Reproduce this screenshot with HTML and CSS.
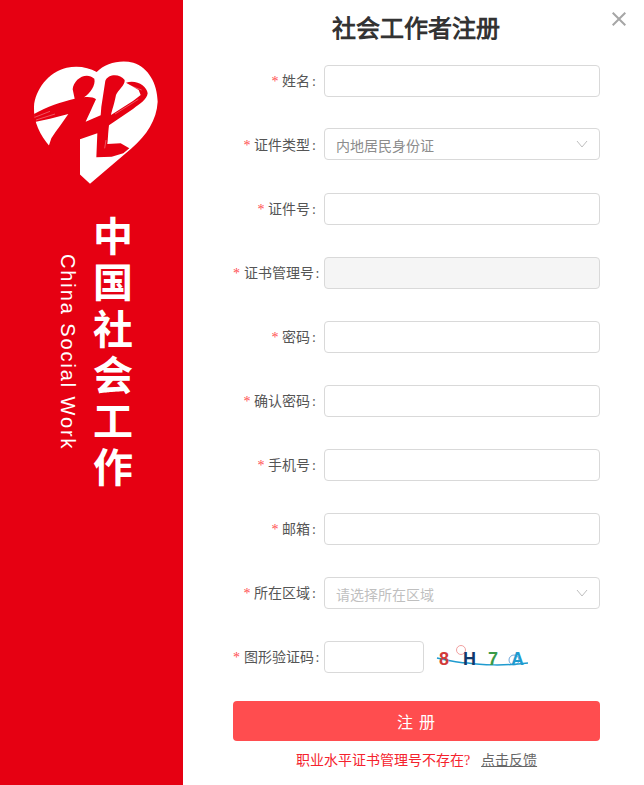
FILE: index.html
```html
<!DOCTYPE html>
<html lang="zh-CN">
<head>
    <meta charset="UTF-8">
    <meta name="viewport" content="width=device-width, initial-scale=1.0">
    <title>社会工作者注册</title>
    <link rel="stylesheet" href="styles.css">
</head>
<body>
    <div class="page">
        <aside class="side">
            <svg class="logo" viewBox="0 0 549 480" width="183" height="160">
                <path fill="#fff" d="M270 431 L150 320 C120 285 100 245 102 200 C105 150 145 95 200 83 C235 76 265 82 290 96 C315 70 360 58 400 68 C445 82 472 130 473 185 C470 240 440 285 395 325 Z"/>
                <path fill="#e60012" d="M218 148 C220 118 258 93 283 116 C288 135 270 160 252 172 C265 170 282 172 288 178 C280 195 268 222 257 245 L302 226 L304 200 L316 122 C325 101 360 100 374 120 C376 135 354 150 348 165 C342 195 336 210 333 225 L400 182 L422 165 L416 150 L378 128 C410 118 440 138 443 160 C441 178 420 192 400 206 L327 256 C324 280 324 300 322 312 L362 310 L388 325 L370 340 L335 350 L289 352 L292 280 L240 298 L240 405 L180 405 L145 322 L154 295 C170 270 190 245 205 222 L150 236 L104 246 L102 222 C140 200 185 185 224 176 Z"/>
                <path stroke="#fff" stroke-width="1" fill="none" d="M104 232 L150 214 M108 240 L165 222 M345 222 L415 178 M340 212 L395 180 M382 134 L425 150 M318 300 L314 325"/>
            </svg>
            <div class="brand">
                <span class="brand-en">China Social Work</span>
                <span class="brand-cn">中国社会工作</span>
            </div>
        </aside>

        <main class="main">
            <button class="close" type="button" aria-label="关闭">
                <svg viewBox="0 0 14 14" width="14" height="14"><path d="M0.7 0.7 L13.3 13.3 M13.3 0.7 L0.7 13.3" stroke="#a6a6a6" stroke-width="2" fill="none"/></svg>
            </button>
            <h1 class="title">社会工作者注册</h1>

            <form class="form">
                <div class="row">
                    <label class="label"><i>*</i> 姓名<span class="colon">:</span></label>
                    <input class="field" type="text">
                </div>
                <div class="row row-id">
                    <label class="label"><i>*</i> 证件类型<span class="colon">:</span></label>
                    <div class="field select">
                        <span>内地居民身份证</span>
                        <svg viewBox="0 0 12 8" width="12" height="8"><path d="M1 1 L6 7 L11 1" stroke="#bfbfbf" fill="none"/></svg>
                    </div>
                </div>
                <div class="row">
                    <label class="label"><i>*</i> 证件号<span class="colon">:</span></label>
                    <input class="field" type="text">
                </div>
                <div class="row">
                    <label class="label"><i>*</i> 证书管理号<span class="colon">:</span></label>
                    <input class="field" type="text" disabled>
                </div>
                <div class="row">
                    <label class="label"><i>*</i> 密码<span class="colon">:</span></label>
                    <input class="field" type="password">
                </div>
                <div class="row">
                    <label class="label"><i>*</i> 确认密码<span class="colon">:</span></label>
                    <input class="field" type="password">
                </div>
                <div class="row">
                    <label class="label"><i>*</i> 手机号<span class="colon">:</span></label>
                    <input class="field" type="text">
                </div>
                <div class="row">
                    <label class="label"><i>*</i> 邮箱<span class="colon">:</span></label>
                    <input class="field" type="text">
                </div>
                <div class="row">
                    <label class="label"><i>*</i> 所在区域<span class="colon">:</span></label>
                    <div class="field select placeholder">
                        <span>请选择所在区域</span>
                        <svg viewBox="0 0 12 8" width="12" height="8"><path d="M1 1 L6 7 L11 1" stroke="#bfbfbf" fill="none"/></svg>
                    </div>
                </div>
                <div class="row row-captcha">
                    <label class="label"><i>*</i> 图形验证码<span class="colon">:</span></label>
                    <input class="field field-short" type="text">
                    <svg class="captcha" viewBox="0 0 115 45" width="115" height="45">
                        <circle cx="36" cy="15" r="4.5" fill="none" stroke="#f2a0a0"/>
                        <circle cx="89" cy="25" r="5" fill="none" stroke="#6fa8dc"/>
                        <path d="M12 23 C25 26 35 28 43 28 C55 30 80 31 103 28" stroke="#1f9bcf" stroke-width="1.5" fill="none"/>
                        <text x="14" y="30" fill="#d13a3a">8</text>
                        <text x="38" y="30" fill="#12386b">H</text>
                        <text x="63" y="30" fill="#3a9a48">7</text>
                        <text x="86" y="30" fill="#1f9bcf">A</text>
                    </svg>
                </div>
                <button class="submit" type="button">注 册</button>
                <p class="tip">职业水平证书管理号不存在?<a href="#">点击反馈</a></p>
            </form>
        </main>
    </div>
</body>
</html>
```

FILE: styles.css
```css
* {
    box-sizing: border-box;
    margin: 0;
    padding: 0;
}

body {
    background: #fff;
    font-family: "Liberation Serif", serif;
    font-size: 14px;
    color: #555;
}

.page {
    display: flex;
    height: 785px;
    overflow: hidden;
}

.side {
    width: 183px;
    flex-shrink: 0;
    background: #e60012;
    padding-top: 40px;
}

.logo {
    display: block;
}

.brand {
    display: flex;
    align-items: flex-start;
    gap: 10px;
    margin-top: 16px;
    padding-left: 56px;
    color: #fff;
    font-family: "Liberation Sans", "Noto Sans CJK SC", sans-serif;
}

.brand-en,
.brand-cn {
    writing-mode: vertical-rl;
    white-space: nowrap;
}

.brand-en {
    margin-top: 38px;
    font-size: 20px;
    line-height: 24px;
    letter-spacing: 1.9px;
}

.brand-cn {
    font-size: 40px;
    line-height: 40px;
    font-weight: 700;
    letter-spacing: 6.2px;
}

.main {
    position: relative;
    flex: 1;
    padding-left: 50px;
}

.close {
    position: absolute;
    top: 12px;
    right: 18px;
    border: 0;
    background: none;
    line-height: 0;
}

.title {
    margin-left: 2px;
    padding-top: 13px;
    height: 65px;
    width: 361px;
    text-align: center;
    font-size: 24px;
    line-height: 32px;
    font-weight: 700;
    color: #333;
}

.form {
    width: 367px;
}

.row {
    display: flex;
    align-items: center;
    height: 32px;
    margin-bottom: 32px;
}

.row-id {
    margin-top: -1px;
    margin-bottom: 33px;
}

.label {
    width: 83px;
    margin-right: 8px;
    padding-bottom: 2px;
    flex-shrink: 0;
    white-space: nowrap;
    text-align: right;
}

.row-id .label {
    padding-bottom: 0;
}

.label i {
    color: #ff4d4f;
    font-style: normal;
}

.colon {
    margin-left: 2px;
}

.field {
    width: 276px;
    height: 32px;
    border: 1px solid #d9d9d9;
    border-radius: 4px;
    background: #fff;
}

.field:disabled {
    background: #f5f5f5;
}

.field-short {
    width: 100px;
}

.select {
    display: flex;
    align-items: center;
    justify-content: space-between;
    padding: 1px 11px 0;
    color: #8c8c8c;
}

.select svg {
    margin-top: -2px;
}

.placeholder {
    color: #bfbfbf;
}

.captcha {
    margin-left: 1px;
}

.captcha text {
    font-family: "Liberation Sans", sans-serif;
    font-size: 18px;
    font-weight: 700;
}

.submit {
    display: block;
    width: 100%;
    height: 40px;
    margin-top: -4px;
    border: 0;
    border-radius: 4px;
    background: #ff4d4f;
    color: #fff;
    font-family: inherit;
    font-size: 16px;
    letter-spacing: 1px;
}

.tip {
    margin-top: 10px;
    text-align: center;
    color: #f5222d;
    line-height: 20px;
}

.tip a {
    margin-left: 11px;
    color: #666;
}
```
